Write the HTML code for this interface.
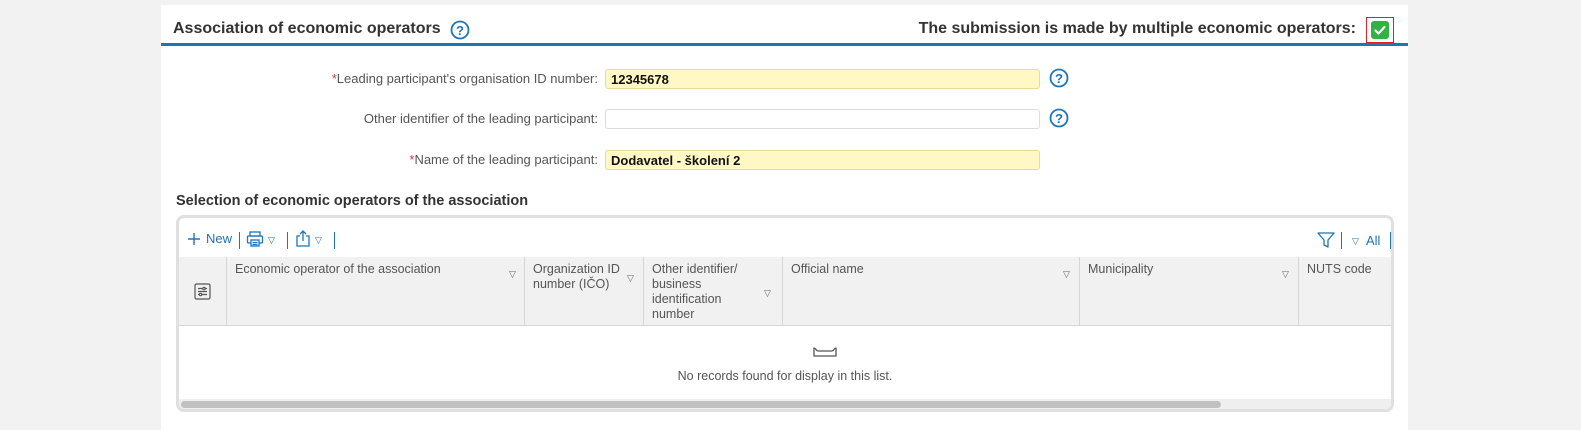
<!DOCTYPE html>
<html><head><meta charset="utf-8">
<style>
*{box-sizing:border-box;margin:0;padding:0}
body{width:1581px;height:430px;background:#f2f2f2;font-family:"Liberation Sans",sans-serif;position:relative;overflow:hidden;color:#333}
.panel{position:absolute;left:161px;top:5px;width:1247px;height:425px;background:#fff}
.a{position:absolute;white-space:nowrap}
.h1{font-size:16px;font-weight:bold;color:#333}
.hr{position:absolute;left:161px;top:43px;width:1247px;height:3px;background:#1f74b5}
.lbl{font-size:13px;color:#555;text-align:right;right:983px}
.lbl .s{color:#d9363e}
.inp{position:absolute;left:605px;width:435px;height:20px;border:1px solid #ddd;border-radius:3px;font-size:13px;font-weight:bold;color:#111;padding:2px 0 0 5px;line-height:15px}
.y{background:#fff8c4;border-color:#e6dc9a}
.tbl{position:absolute;left:176px;top:215px;width:1218px;height:197px;border:3px solid #e0e0e0;border-radius:8px;overflow:hidden;background:#fff}
.hd{position:absolute;top:39px;height:69px;background:#f1f1f1;border-right:1px solid #d6d6d6;border-bottom:1px solid #d6d6d6;font-size:12.5px;color:#555;padding:5px 8px;line-height:15px;white-space:normal}
.tri{position:absolute;font-size:9px;color:#666}
.blue{color:#1f74b5}
.sep{position:absolute;width:1px;height:17px;background:#1f74b5;top:14px}
</style></head><body>
<div class="panel"></div>
<div class="a h1" style="left:173px;top:20px">Association of economic operators</div>
<svg class="a" style="left:450px;top:20px" width="20" height="20" viewBox="0 0 20 20"><circle cx="10" cy="10" r="8.5" fill="none" stroke="#1f74b5" stroke-width="1.8"/><text x="10" y="15" text-anchor="middle" font-family="Liberation Sans" font-weight="bold" font-size="13" fill="#1f74b5">?</text></svg>
<div class="a h1" style="right:225px;top:20px">The submission is made by multiple economic operators:</div>
<div class="a" style="left:1366px;top:17px;width:28px;height:26px;border:1.5px solid #e02020"></div>
<svg class="a" style="left:1371px;top:21px" width="18" height="18" viewBox="0 0 18 18"><rect x="0" y="0" width="18" height="18" rx="3" fill="#2fb344"/><path d="M4.5 9.5l3 3 6-6.5" fill="none" stroke="#fff" stroke-width="2.2" stroke-linecap="round" stroke-linejoin="round"/></svg>
<div class="hr"></div>

<div class="a lbl" style="top:71px"><span class="s">*</span>Leading participant's organisation ID number:</div>
<div class="inp y" style="top:69px">12345678</div>
<svg class="a" style="left:1049px;top:68px" width="20" height="20" viewBox="0 0 20 20"><circle cx="10" cy="10" r="8.5" fill="none" stroke="#1f74b5" stroke-width="1.8"/><text x="10" y="15" text-anchor="middle" font-family="Liberation Sans" font-weight="bold" font-size="13" fill="#1f74b5">?</text></svg>
<div class="a lbl" style="top:111px">Other identifier of the leading participant:</div>
<div class="inp" style="top:109px"></div>
<svg class="a" style="left:1049px;top:108px" width="20" height="20" viewBox="0 0 20 20"><circle cx="10" cy="10" r="8.5" fill="none" stroke="#1f74b5" stroke-width="1.8"/><text x="10" y="15" text-anchor="middle" font-family="Liberation Sans" font-weight="bold" font-size="13" fill="#1f74b5">?</text></svg>
<div class="a lbl" style="top:152px"><span class="s">*</span>Name of the leading participant:</div>
<div class="inp y" style="top:150px">Dodavatel - školení 2</div>

<div class="a" style="left:176px;top:193px;font-size:14.5px;font-weight:bold;color:#333">Selection of economic operators of the association</div>

<div class="tbl">
 <svg class="a" style="left:7px;top:13px" width="16" height="16" viewBox="0 0 16 16"><path d="M8 2v12M2 8h12" stroke="#1f74b5" stroke-width="1.4"/></svg>
 <div class="a blue" style="left:27px;top:13px;font-size:13px">New</div>
 <div class="sep" style="left:60px"></div>
 <svg class="a" style="left:67px;top:12px" width="18" height="18" viewBox="0 0 18 18" fill="none" stroke="#1f74b5" stroke-width="1.3"><rect x="4" y="2" width="10" height="4"/><rect x="1.5" y="6" width="15" height="7" rx="1"/><rect x="5" y="10" width="8" height="6" fill="#fff"/><path d="M6.5 12.5h5M6.5 14.5h5"/></svg>
 <div class="tri blue" style="left:89px;top:17px">▽</div>
 <div class="sep" style="left:108px"></div>
 <svg class="a" style="left:116px;top:11px" width="16" height="18" viewBox="0 0 16 18" fill="none" stroke="#1f74b5" stroke-width="1.3"><path d="M5 7H2v10h12V7h-3M8 12V2M5 5l3-3 3 3"/></svg>
 <div class="tri blue" style="left:136px;top:17px">▽</div>
 <div class="sep" style="left:155px"></div>
 <svg class="a" style="left:1137px;top:12px" width="20" height="20" viewBox="0 0 20 20"><path d="M2 3h16l-6 7v7l-4-2v-5z" fill="none" stroke="#1f74b5" stroke-width="1.3" stroke-linejoin="round"/></svg>
 <div class="sep" style="left:1162px"></div>
 <div class="tri blue" style="left:1173px;top:18px">▽</div>
 <div class="a blue" style="left:1187px;top:15px;font-size:13px">All</div>
 <div class="sep" style="left:1211px"></div>

 <div class="hd" style="left:0;width:48px"><svg class="a" style="left:15px;top:26px" width="17" height="17" viewBox="0 0 17 17" fill="none" stroke="#555" stroke-width="1.2"><rect x="1" y="1" width="15" height="15" rx="1.5"/><path d="M4 5.5h9M4 8.5h9M4 11.5h9"/><circle cx="10" cy="5.5" r="1.2" fill="#f1f1f1"/><circle cx="6.5" cy="11.5" r="1.2" fill="#f1f1f1"/></svg></div>
 <div class="hd" style="left:48px;width:298px">Economic operator of the association<span class="tri" style="left:282px;top:10px">▽</span></div>
 <div class="hd" style="left:346px;width:119px;padding-right:20px">Organization ID number (IČO)<span class="tri" style="left:102px;top:14px">▽</span></div>
 <div class="hd" style="left:465px;width:139px;padding-right:30px">Other identifier/ business identification number<span class="tri" style="left:120px;top:29px">▽</span></div>
 <div class="hd" style="left:604px;width:297px">Official name<span class="tri" style="left:280px;top:10px">▽</span></div>
 <div class="hd" style="left:901px;width:219px">Municipality<span class="tri" style="left:202px;top:10px">▽</span></div>
 <div class="hd" style="left:1120px;width:100px;border-right:none">NUTS code</div>

 <svg class="a" style="left:633px;top:128px" width="26" height="12" viewBox="0 0 26 12"><path d="M2 2v8h22V2c-2 0-2 3-4 3H6C4 5 4 2 2 2z" fill="none" stroke="#555" stroke-width="1.3" stroke-linejoin="round"/></svg>
 <div class="a" style="left:0;width:1212px;text-align:center;top:151px;font-size:12.5px;color:#555">No records found for display in this list.</div>
 <div class="a" style="left:0;top:181px;width:1212px;height:10px;background:#efefef"></div>
 <div class="a" style="left:2px;top:183px;width:1040px;height:7px;background:#c1c1c1;border-radius:4px"></div>
</div>
</body></html>
